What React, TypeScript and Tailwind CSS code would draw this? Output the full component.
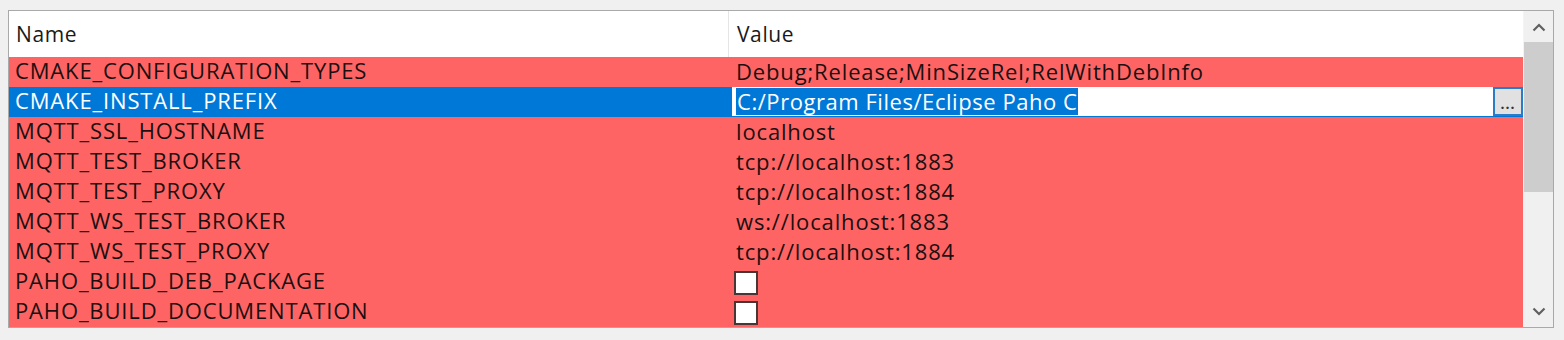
import React from "react";

const rows: { name: string; value?: string; check?: boolean; selected?: boolean }[] = [
  { name: "CMAKE_CONFIGURATION_TYPES", value: "Debug;Release;MinSizeRel;RelWithDebInfo" },
  { name: "CMAKE_INSTALL_PREFIX", value: "C:/Program Files/Eclipse Paho C", selected: true },
  { name: "MQTT_SSL_HOSTNAME", value: "localhost" },
  { name: "MQTT_TEST_BROKER", value: "tcp://localhost:1883" },
  { name: "MQTT_TEST_PROXY", value: "tcp://localhost:1884" },
  { name: "MQTT_WS_TEST_BROKER", value: "ws://localhost:1883" },
  { name: "MQTT_WS_TEST_PROXY", value: "tcp://localhost:1884" },
  { name: "PAHO_BUILD_DEB_PACKAGE", check: true },
  { name: "PAHO_BUILD_DOCUMENTATION", check: true },
];

export default function App() {
  return (
    <div
      className="w-[1564px] h-[340px] bg-[#f0f0f0] pt-[10px] pl-[8px] overflow-hidden"
      style={{ fontFamily: '"Open Sans", "Noto Sans", sans-serif' }}
    >
      <div className="w-[1546px] h-[318px] border border-[#a9a9a9] bg-white flex">
        <div className="w-[1514px] flex flex-col">
          <div className="h-[46px] flex text-[21px] tracking-[0.6px] text-[#1a1a1a] bg-white">
            <div className="w-[720px] border-r border-[#e5e5e5] flex items-center pl-[7px] pt-[1px]">Name</div>
            <div className="flex-1 flex items-center pl-[8px] pt-[1px]">Value</div>
          </div>
          {rows.map((r) => (
            <div
              key={r.name}
              className={`h-[30px] flex text-[22px] tracking-[0.85px] leading-[27px] ${r.selected ? "bg-[#0078d7]" : "bg-[#ff6464]"}`}
            >
              <div className={`w-[720px] pl-[6px] ${r.selected ? "text-white" : "text-[#1a1010]"}`}>{r.name}</div>
              {r.selected ? (
                <div className="flex-1 flex pl-[2px] h-[30px]">
                  <div className="w-[762px] h-[29px] bg-white flex items-center pl-[2px] border-l border-[#0078d7]">
                    <div className="h-[27px] flex items-center">
                      <span className="w-[2px] h-[24px] bg-white" />
                      <span className="bg-[#0078d7] text-white leading-[26px] pb-[1px] pl-[1px] pr-[1px] tracking-[0.55px]">{r.value}</span>
                    </div>
                  </div>
                  <div className="w-[30px] h-[29px] bg-[#e1e1e1] border-2 border-[#2a7bc8] flex items-end justify-center pb-[3px]">
                    <span className="text-[14px] leading-[14px] font-bold text-[#333] tracking-[1px]">...</span>
                  </div>
                </div>
              ) : (
                <div className="flex-1 pl-[7px] text-[#1a1010] flex items-center pb-[2px]">
                  {r.check ? (
                    <div className="w-[24px] h-[24px] bg-white border-2 border-[#4a3434] ml-[-2px] mt-[3px]" />
                  ) : (
                    r.value
                  )}
                </div>
              )}
            </div>
          ))}
        </div>
        <div className="flex-1 bg-[#f0f0f0] border-l border-[#f4f4f4] flex flex-col">
          <div className="h-[31px] flex items-center justify-center pt-[2px]">
            <svg width="14" height="9" viewBox="0 0 14 9">
              <path d="M1.5 7.5 L7 2 L12.5 7.5" fill="none" stroke="#606060" strokeWidth="2.2" />
            </svg>
          </div>
          <div className="h-[150px] bg-[#cdcdcd]" />
          <div className="flex-1" />
          <div className="h-[30px] flex items-center justify-center pb-[2px]">
            <svg width="14" height="9" viewBox="0 0 14 9">
              <path d="M1.5 1.5 L7 7 L12.5 1.5" fill="none" stroke="#606060" strokeWidth="2.2" />
            </svg>
          </div>
        </div>
      </div>
    </div>
  );
}
